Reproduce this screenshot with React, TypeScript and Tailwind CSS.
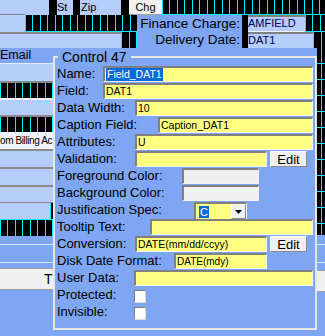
import type { ReactNode } from 'react'

const light = 'bg-[#b4cdfa]'
const mid = 'bg-[#7ea6f2]'
const gridV = 'bg-black bg-[image:repeating-linear-gradient(90deg,#00f0ff_0_1px,transparent_1px_7.5px)]'
const gridSide =
  'bg-black bg-[image:repeating-linear-gradient(90deg,transparent_0_4px,#00f0ff_4px_5px,transparent_5px_8px),repeating-linear-gradient(180deg,transparent_0_15px,#00f0ff_15px_16px)]'
const sunken =
  'border-t-2 border-l-2 border-b border-r border-t-[#808080] border-l-[#808080] border-b-[#f4f4f4] border-r-[#f4f4f4]'

function Input({ className = '', children }: { className?: string; children?: ReactNode }) {
  return (
    <div className={`h-4 bg-[#ffff80] ${sunken} flex items-center pl-px text-[10.5px] leading-none text-black whitespace-nowrap ${className}`}>
      {children}
    </div>
  )
}

function EditButton() {
  return (
    <div className="ml-[3px] w-[37px] h-4 bg-[#f0f0f0] border border-t-white border-l-white border-b-[#8a8a8a] border-r-[#8a8a8a] flex items-center justify-center text-[13px] leading-none">
      Edit
    </div>
  )
}

function Row({ label, labelW, children }: { label: string; labelW: string; children?: ReactNode }) {
  return (
    <div className="h-[17px] flex items-end">
      <div className={`${labelW} shrink-0 h-4 leading-4 text-[13px] whitespace-nowrap`}>{label}</div>
      {children}
    </div>
  )
}

function Check() {
  return <div className="w-[12px] h-[13px] bg-white border border-t-[#808080] border-l-[#808080] border-b-[#dcdcdc] border-r-[#dcdcdc]" />
}

export default function App() {
  return (
    <div className={`w-[325px] h-[336px] overflow-hidden ${light} font-['Liberation_Sans',Arial,sans-serif] text-black`}>
      {/* designer canvas, top strip */}
      <div className="h-[15px] flex">
        <div className={`w-[25px] ${light} border-b border-[#808080]`} />
        <div className={`w-[24px] ${light}`} />
        <div className="w-[8px] bg-black" />
        <div className={`w-[16px] ${light} text-[11px] leading-[14px]`}>St</div>
        <div className="w-[7px] bg-black" />
        <div className={`w-[41px] ${light} text-[11px] leading-[14px] pl-px`}>Zip</div>
        <div className="w-[8px] bg-black" />
        <div className="w-[33px] bg-[#f0f0f0] border-b border-[#a0a0a0] text-[11px] leading-[14px] text-center">Chg</div>
        <div className={`flex-1 ${gridV} border-b border-[#00f0ff]`} />
      </div>
      <div className="h-[17px] flex">
        <div className={`w-[25px] ${light}`} />
        <div className={`w-[112px] ${gridV} border-b border-[#00f0ff]`} />
        <div className={`w-[105px] ${mid} text-[13.5px] leading-[17px] text-right pr-[2px] whitespace-nowrap`}>Finance Charge:</div>
        <div className="w-[6px] bg-black" />
        <div className={`w-[57px] ${light} border-t-2 border-[#808080] border-b border-b-[#eef3fc] text-[11px] leading-[13px] text-[#000050]`}>AMFIELD</div>
        <div className={`flex-1 ${gridV} border-b border-[#00f0ff]`} />
      </div>
      <div className="h-[16px] flex">
        <div className={`w-[121px] ${light} border-t-2 border-[#8a8a8a]`} />
        <div className={`w-[16px] ${gridV}`} />
        <div className={`w-[105px] ${mid} text-[13.5px] leading-[16px] text-right pr-[2px] whitespace-nowrap`}>Delivery Date:</div>
        <div className="w-[6px] bg-black" />
        <div className={`w-[65px] ${light} border-t-2 border-[#808080] text-[11px] leading-[13px] text-[#000050]`}>DAT1</div>
        <div className={`flex-1 ${gridV}`} />
      </div>

      <div className="h-[288px] flex">
        {/* left side of the form behind the dialog */}
        <div className="w-[53px] flex flex-col overflow-hidden">
          <div className={`h-[15px] ${mid} text-[12.5px] leading-[15px]`}>Email</div>
          <div className="h-px bg-[#e4ecfb]" />
          <div className={`h-[17px] ${light}`} />
          <div className="h-[2px] bg-[#8a8a8a]" />
          <div className={`h-[15px] ${gridV}`} />
          <div className="h-[2px] bg-[#eef3fc]" />
          <div className={`h-[15px] ${light}`} />
          <div className="h-[2px] bg-[#8a8a8a]" />
          <div className={`h-[15px] ${gridV}`} />
          <div className="h-[17px] bg-[#eef2fa] text-[10px] tracking-[-0.4px] leading-[17px] whitespace-nowrap">om Billing Ac</div>
          <div className="h-[2px] bg-[#8a8a8a]" />
          <div className={`h-[16px] ${light}`} />
          <div className="h-[2px] bg-[#8a8a8a]" />
          <div className={`h-[16px] ${light}`} />
          <div className="h-[2px] bg-[#8a8a8a]" />
          <div className={`h-[15px] ${light}`} />
          <div className="h-px bg-[#8a8a8a]" />
          <div className="h-[16px] flex">
            <div className={`flex-1 ${light}`} />
            <div className="w-[3px] bg-black border-l border-[#00f0ff]" />
          </div>
          <div className={`h-[17px] ${gridV} border-t border-[#00f0ff]`} />
          <div className={`h-[8px] ${mid}`} />
          <div className="h-px bg-[#d8e4fa]" />
          <div className={`h-[17px] ${mid}`} />
          <div className="h-px bg-[#d8e4fa]" />
          <div className={`h-[5px] ${mid}`} />
          <div className="h-[22px] bg-[#f0f0f0] border-t border-b border-[#a0a0a0] text-[14px] leading-[20px] pl-[44px]">T</div>
          <div className={`flex-1 ${mid}`} />
        </div>

        {/* property dialog */}
        <div className={`w-[264px] ${mid}`}>
          <fieldset className="mt-px h-[281px] border-2 border-[#e6e6e6] px-[2px]">
            <legend className="ml-px px-1 text-[14px] leading-4">Control 47</legend>
            <Row label="Name:" labelW="w-[46px]">
              <Input className="flex-1">
                <span className="bg-[#0a6ad8] text-white px-px leading-[13px]">Field_DAT1</span>
              </Input>
            </Row>
            <Row label="Field:" labelW="w-[46px]">
              <Input className="flex-1">DAT1</Input>
            </Row>
            <Row label="Data Width:" labelW="w-[78px]">
              <Input className="flex-1">10</Input>
            </Row>
            <Row label="Caption Field:" labelW="w-[101px]">
              <Input className="flex-1">Caption_DAT1</Input>
            </Row>
            <Row label="Attributes:" labelW="w-[78px]">
              <Input className="flex-1">U</Input>
            </Row>
            <Row label="Validation:" labelW="w-[78px]">
              <Input className="w-[132px]" />
              <EditButton />
            </Row>
            <Row label="Foreground Color:" labelW="w-[125px]">
              <div className={`w-[77px] h-4 bg-[#f0f0f0] ${sunken}`} />
            </Row>
            <Row label="Background Color:" labelW="w-[125px]">
              <div className={`w-[77px] h-4 bg-[#f0f0f0] ${sunken}`} />
            </Row>
            <Row label="Justification Spec:" labelW="w-[137px]">
              <div className={`self-start mt-px w-[53px] h-[18px] bg-[#ffff80] ${sunken} flex items-center`}>
                <span className="ml-[3px] bg-[#0a6ad8] text-white text-[11px] leading-[12px] px-px">C</span>
                <div className="ml-auto w-[15px] h-full bg-[#f0f0f0] border border-t-white border-l-white border-b-[#8a8a8a] border-r-[#8a8a8a] flex items-center justify-center">
                  <svg width="7" height="4" viewBox="0 0 7 4">
                    <path d="M0 0h7L3.5 4z" fill="#000" />
                  </svg>
                </div>
              </div>
            </Row>
            <Row label="Tooltip Text:" labelW="w-[93px]">
              <Input className="flex-1" />
            </Row>
            <Row label="Conversion:" labelW="w-[78px]">
              <Input className="w-[132px]">DATE(mm/dd/ccyy)</Input>
              <EditButton />
            </Row>
            <Row label="Disk Date Format:" labelW="w-[117px]">
              <Input className="w-[93px] text-[10px]">DATE(mdy)</Input>
            </Row>
            <Row label="User Data:" labelW="w-[77px]">
              <Input className="flex-1" />
            </Row>
            <Row label="Protected:" labelW="w-[77px]">
              <Check />
            </Row>
            <Row label="Invisible:" labelW="w-[77px]">
              <Check />
            </Row>
          </fieldset>
        </div>

        {/* right edge of the canvas */}
        <div className="w-[8px] flex flex-col">
          <div className={`h-[187px] ${gridSide}`} />
          <div className={`h-[9px] ${mid}`} />
          <div className="h-px bg-[#d8e4fa]" />
          <div className={`h-[17px] ${mid}`} />
          <div className="h-px bg-[#d8e4fa]" />
          <div className={`h-[7px] ${mid}`} />
          <div className="h-[22px] bg-[#f0f0f0] border-t border-b border-[#a0a0a0]" />
          <div className={`flex-1 ${mid}`} />
        </div>
      </div>
    </div>
  )
}
